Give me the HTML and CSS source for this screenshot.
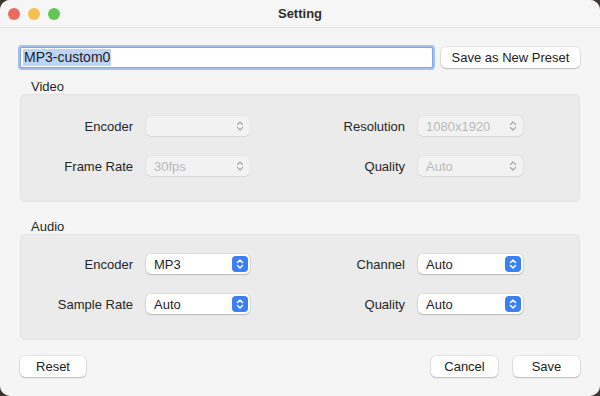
FILE: index.html
```html
<!DOCTYPE html>
<html>
<head>
<meta charset="utf-8">
<link rel="stylesheet" href="styles.css">
</head>
<body>
<div class="window">
  <header class="titlebar">
    <div class="lights">
      <span class="light red"></span>
      <span class="light yellow"></span>
      <span class="light green"></span>
    </div>
    <div class="title">Setting</div>
  </header>
  <main class="content">
    <div class="preset-row">
      <div class="field"><span class="sel">MP3-custom0</span></div>
      <button class="btn preset-btn">Save as New Preset</button>
    </div>

    <div class="group-label">Video</div>
    <section class="group group-video">
      <div class="lbl">Encoder</div>
      <div class="popup disabled"><span class="val"></span><span class="arrows"><svg viewBox="0 0 16 16"><path d="M5.5 6.5 8 4 10.5 6.5M5.5 9.5 8 12 10.5 9.5"/></svg></span></div>
      <div class="lbl">Resolution</div>
      <div class="popup disabled"><span class="val">1080x1920</span><span class="arrows"><svg viewBox="0 0 16 16"><path d="M5.5 6.5 8 4 10.5 6.5M5.5 9.5 8 12 10.5 9.5"/></svg></span></div>
      <div class="lbl">Frame Rate</div>
      <div class="popup disabled"><span class="val">30fps</span><span class="arrows"><svg viewBox="0 0 16 16"><path d="M5.5 6.5 8 4 10.5 6.5M5.5 9.5 8 12 10.5 9.5"/></svg></span></div>
      <div class="lbl">Quality</div>
      <div class="popup disabled"><span class="val">Auto</span><span class="arrows"><svg viewBox="0 0 16 16"><path d="M5.5 6.5 8 4 10.5 6.5M5.5 9.5 8 12 10.5 9.5"/></svg></span></div>
    </section>

    <div class="group-label audio-label">Audio</div>
    <section class="group group-audio">
      <div class="lbl">Encoder</div>
      <div class="popup"><span class="val">MP3</span><span class="arrows"><svg viewBox="0 0 16 16"><path d="M5.5 6.5 8 4 10.5 6.5M5.5 9.5 8 12 10.5 9.5"/></svg></span></div>
      <div class="lbl">Channel</div>
      <div class="popup"><span class="val">Auto</span><span class="arrows"><svg viewBox="0 0 16 16"><path d="M5.5 6.5 8 4 10.5 6.5M5.5 9.5 8 12 10.5 9.5"/></svg></span></div>
      <div class="lbl">Sample Rate</div>
      <div class="popup"><span class="val">Auto</span><span class="arrows"><svg viewBox="0 0 16 16"><path d="M5.5 6.5 8 4 10.5 6.5M5.5 9.5 8 12 10.5 9.5"/></svg></span></div>
      <div class="lbl">Quality</div>
      <div class="popup"><span class="val">Auto</span><span class="arrows"><svg viewBox="0 0 16 16"><path d="M5.5 6.5 8 4 10.5 6.5M5.5 9.5 8 12 10.5 9.5"/></svg></span></div>
    </section>

    <footer class="footer">
      <button class="btn reset-btn">Reset</button>
      <div class="spacer"></div>
      <button class="btn cancel-btn">Cancel</button>
      <button class="btn save-btn">Save</button>
    </footer>
  </main>
</div>
</body>
</html>
```
FILE: styles.css
```css
* { box-sizing: border-box; }
html, body {
  margin: 0;
  padding: 0;
  width: 600px;
  height: 396px;
  overflow: hidden;
  background: #3e3530;
}
body {
  font-family: "Liberation Sans", Arial, sans-serif;
  font-size: 13px;
  color: #262626;
}
.window {
  width: 600px;
  height: 396px;
  background: #f5f5f5;
  border-radius: 10px;
  overflow: hidden;
  display: flex;
  flex-direction: column;
}
.titlebar {
  height: 28px;
  flex: none;
  display: flex;
  align-items: center;
  background: #f6f6f6;
  border-bottom: 1px solid #e2e2e2;
  position: relative;
}
.lights {
  display: flex;
  gap: 8px;
  padding-left: 8px;
  padding-top: 1px;
}
.light {
  width: 12px;
  height: 12px;
  border-radius: 50%;
}
.red { background: #ec6a5f; }
.yellow { background: #f4bf4f; }
.green { background: #62c655; }
.title {
  position: absolute;
  left: 0;
  right: 0;
  top: 0;
  height: 27px;
  line-height: 27px;
  text-align: center;
  font-weight: bold;
  font-size: 13px;
  color: #2e2e2e;
  pointer-events: none;
}
.content {
  flex: 1;
  padding: 19px 20px 0 20px;
  display: flex;
  flex-direction: column;
}
.preset-row {
  display: flex;
  align-items: center;
  height: 21px;
}
.field {
  width: 413px;
  height: 21px;
  background: #fff;
  border: 1px solid #7fa6e6;
  box-shadow: 0 0 0 2px #a3c0ef;
  border-radius: 2px;
  padding-left: 2px;
  display: flex;
  align-items: center;
  font-size: 14px;
}
.sel {
  background: #bcd4f6;
  color: #1e1e1e;
  line-height: 17px;
  padding: 0 1px;
}
.btn {
  font-family: "Liberation Sans", Arial, sans-serif;
  font-size: 13px;
  color: #222;
  background: #fff;
  border: none;
  border-radius: 5px;
  height: 21px;
  padding: 0;
  box-shadow: 0 0 0 0.5px rgba(0,0,0,0.14), 0 1px 1.5px rgba(0,0,0,0.18);
}
.preset-btn {
  margin-left: 8px;
  width: 139px;
}
.group-label {
  margin-top: 12px;
  padding-left: 11px;
  line-height: 14px;
  height: 14px;
  color: #262626;
}
.audio-label {
  margin-top: 18px;
}
.group {
  background: #ebebeb;
  border: 1px solid #e3e3e3;
  border-radius: 5px;
  display: grid;
  grid-template-columns: 112px 104px 142px 105px;
  column-gap: 13px;
  row-gap: 20px;
  padding-bottom: 25px;
  align-items: center;
}
.group-video { padding-top: 21px; }
.group-audio { padding-top: 19px; }
.lbl {
  text-align: right;
  color: #262626;
}
.popup {
  height: 20px;
  background: #fff;
  border-radius: 5px;
  box-shadow: 0 0 0 0.5px rgba(0,0,0,0.12), 0 1px 1.5px rgba(0,0,0,0.16);
  display: flex;
  align-items: center;
  padding-left: 8px;
  padding-right: 2px;
}
.val {
  flex: 1;
  color: #1f1f1f;
}
.arrows {
  width: 16px;
  height: 16px;
  border-radius: 4px;
  background: #3a7ff3;
  display: flex;
}
.arrows svg {
  width: 16px;
  height: 16px;
  fill: none;
  stroke: #fff;
  stroke-width: 1.5;
  stroke-linecap: round;
  stroke-linejoin: round;
}
.popup.disabled {
  background: #f2f2f2;
  box-shadow: 0 0 0 0.5px rgba(0,0,0,0.05), 0 1px 1px rgba(0,0,0,0.06);
}
.popup.disabled .val { color: #b9b9b9; }
.popup.disabled .arrows { background: transparent; }
.popup.disabled .arrows svg { stroke: #a9a9a9; stroke-width: 1.2; }
.footer {
  margin-top: 16px;
  display: flex;
  align-items: center;
}
.spacer { flex: 1; }
.reset-btn { width: 66px; }
.cancel-btn { width: 67px; }
.save-btn { width: 67px; margin-left: 15px; }
```
